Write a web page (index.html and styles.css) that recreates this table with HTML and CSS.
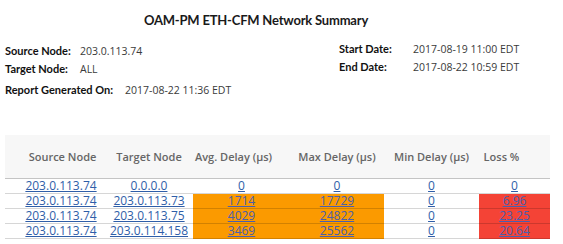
FILE: index.html
```html
<!DOCTYPE html>
<html lang="en">
<head>
<meta charset="utf-8">
<title>OAM-PM ETH-CFM Network Summary</title>
<link rel="stylesheet" href="styles.css">
</head>
<body>
<div class="report">
  <h1 class="title">OAM-PM ETH-CFM Network Summary</h1>

  <div class="meta">
    <div class="meta-left">
      <div class="meta-row"><span class="label">Source Node:</span><span class="value">203.0.113.74</span></div>
      <div class="meta-row"><span class="label">Target Node:</span><span class="value">ALL</span></div>
      <div class="meta-row generated"><span class="label wide">Report Generated On:</span><span class="value">2017-08-22 11:36 EDT</span></div>
    </div>
    <div class="meta-right">
      <div class="meta-row"><span class="label">Start Date:</span><span class="value">2017-08-19 11:00 EDT</span></div>
      <div class="meta-row"><span class="label">End Date:</span><span class="value">2017-08-22 10:59 EDT</span></div>
    </div>
  </div>

  <table class="summary">
    <colgroup>
      <col class="c-src"><col class="c-tgt"><col class="c-avg"><col class="c-max"><col class="c-min"><col class="c-loss">
    </colgroup>
    <thead>
      <tr>
        <th class="h-src">Source Node</th>
        <th>Target Node</th>
        <th class="h-avg">Avg. Delay (µs)</th>
        <th>Max Delay (µs)</th>
        <th>Min Delay (µs)</th>
        <th class="h-loss">Loss %</th>
      </tr>
    </thead>
    <tbody>
      <tr>
        <td class="src"><a href="#">203.0.113.74</a></td>
        <td><a href="#">0.0.0.0</a></td>
        <td><a href="#">0</a></td>
        <td><a href="#">0</a></td>
        <td><a href="#">0</a></td>
        <td><a href="#">0</a></td>
      </tr>
      <tr>
        <td class="src"><a href="#">203.0.113.74</a></td>
        <td><a href="#">203.0.113.73</a></td>
        <td class="warn"><a href="#">1714</a></td>
        <td class="warn"><a href="#">17729</a></td>
        <td><a href="#">0</a></td>
        <td class="crit"><a href="#">6.96</a></td>
      </tr>
      <tr>
        <td class="src"><a href="#">203.0.113.74</a></td>
        <td><a href="#">203.0.113.75</a></td>
        <td class="warn"><a href="#">4029</a></td>
        <td class="warn"><a href="#">24822</a></td>
        <td><a href="#">0</a></td>
        <td class="crit"><a href="#">23.25</a></td>
      </tr>
      <tr>
        <td class="src"><a href="#">203.0.113.74</a></td>
        <td><a href="#">203.0.114.158</a></td>
        <td class="warn"><a href="#">3469</a></td>
        <td class="warn"><a href="#">25562</a></td>
        <td><a href="#">0</a></td>
        <td class="crit"><a href="#">20.64</a></td>
      </tr>
    </tbody>
  </table>
</div>
</body>
</html>
```

FILE: styles.css
```css
html, body {
  margin: 0;
  padding: 0;
  background: #ffffff;
}

body {
  font-family: "Open Sans", "Noto Sans", sans-serif;
  color: #333333;
}

.report {
  width: 563px;
}

.title {
  width: 512px;
  margin: 0;
  padding-top: 10px;
  font-family: Lato, "Open Sans", sans-serif;
  font-size: 13px;
  letter-spacing: -0.2px;
  line-height: 21px;
  font-weight: 700;
  text-align: center;
  color: #1a1a1a;
}

/* header block with node and date details */
.meta {
  display: flex;
  margin-top: 9px;
  padding-left: 5px;
}

.meta-left {
  width: 334px;
  padding-top: 2px;
}

.meta-row {
  display: flex;
  font-size: 10.5px;
  line-height: 18px;
}

.meta-row.generated {
  margin-top: 3px;
}

.label {
  width: 75px;
  font-family: Lato, "Open Sans", sans-serif;
  font-size: 11px;
  font-weight: 700;
  color: #111111;
}

.label.wide {
  width: 120px;
}

.meta-right .label {
  width: 74px;
}

.value {
  color: #3a3a3a;
}

/* summary table */
.summary {
  margin-top: 36px;
  margin-left: 5px;
  width: 545px;
  border-collapse: collapse;
  table-layout: fixed;
}

.c-src { width: 100px; }
.c-tgt { width: 88px; }
.c-avg { width: 97px; }
.c-max { width: 94px; }
.c-min { width: 95px; }
.c-loss { width: 71px; }

.summary th {
  background: #f7f7f7;
  height: 43px;
  padding: 0;
  font-size: 11px;
  font-weight: 600;
  color: #666666;
  text-align: center;
  border-bottom: 1px solid #c4c4c4;
  white-space: nowrap;
}

.summary th.h-src {
  padding-left: 15px;
}

.summary th.h-avg {
  padding-right: 16px;
}

.summary th.h-loss {
  padding-right: 26px;
}

.summary td {
  height: 14px;
  padding: 0;
  font-size: 12px;
  line-height: 14px;
  text-align: center;
  border-bottom: 1px solid rgba(0, 0, 0, 0.16);
  white-space: nowrap;
}

.summary td.src {
  padding-left: 12px;
}

.summary a {
  display: inline-block;
  line-height: 14px;
  color: #2f5ea8;
  text-decoration: underline;
}

.summary td.warn {
  background: #fb9a00;
}

.summary td.crit {
  background: #f44336;
}

.summary td.warn a,
.summary td.crit a {
  color: #4a5fae;
}
```
